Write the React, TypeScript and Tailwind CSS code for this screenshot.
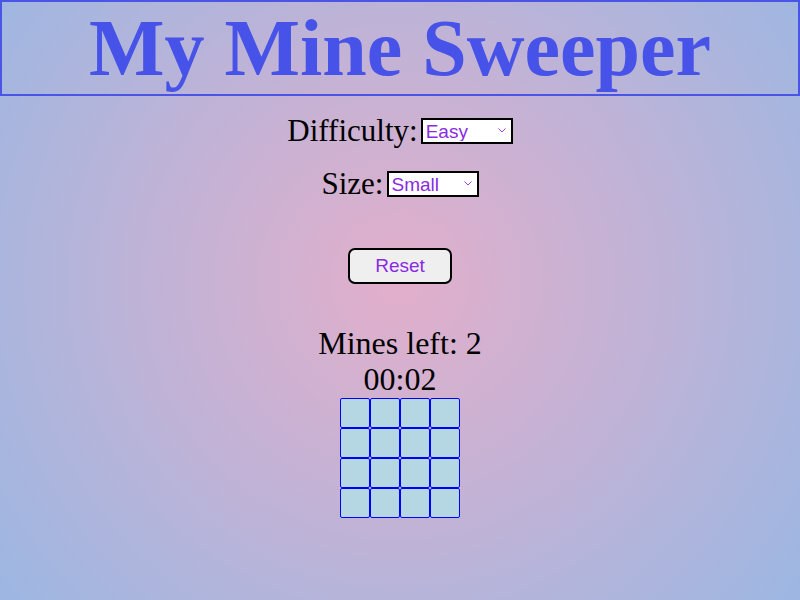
import React, { useState } from 'react';

const Chevron: React.FC = () => (
    <svg width="8" height="5" viewBox="0 0 8 5" className="absolute right-[7px] top-[10px] pointer-events-none">
        <path d="M0.5 0.5 L4 4 L7.5 0.5" fill="none" stroke="#8a2be2" strokeWidth="0.9" />
    </svg>
);

interface PickerProps {
    value: string;
    options: string[];
    onChange: (v: string) => void;
}

const Picker: React.FC<PickerProps> = ({ value, options, onChange }) => {
    return (
        <div className="relative ml-[3px] w-[92px] h-[26px]">
            <select
                value={value}
                onChange={(e) => onChange(e.target.value)}
                className="appearance-none w-full h-full border-2 border-black bg-white text-[#8a2be2] text-[19px] pl-[3px] font-['Liberation_Sans',Arial,sans-serif] leading-none outline-none"
            >
                {options.map((o) => (
                    <option key={o} value={o}>
                        {o}
                    </option>
                ))}
            </select>
            <Chevron />
        </div>
    );
};

const App: React.FC = () => {
    const [difficulty, setDifficulty] = useState('Easy');
    const [size, setSize] = useState('Small');
    const cells = Array.from({ length: 16 });

    return (
        <div className="w-full min-h-[600px] bg-[radial-gradient(circle_at_50%_47%,#e2afcb_0%,#9cb7e2_100%)] bg-[#9cb7e2] font-['Liberation_Serif','Times_New_Roman',serif] text-black">
            <h1 className="border-2 border-[#4a55e6] text-center text-[80px] font-bold leading-[92px] text-[#4752e8]">
                My Mine Sweeper
            </h1>
            <div className="flex flex-col items-center">
                <div className="mt-[17px] h-[36px] flex items-center">
                    <span className="text-[31px]">Difficulty:</span>
                    <Picker value={difficulty} options={['Easy', 'Medium', 'Hard']} onChange={setDifficulty} />
                </div>
                <div className="mt-[17px] h-[36px] flex items-center">
                    <span className="text-[31px]">Size:</span>
                    <Picker value={size} options={['Small', 'Medium', 'Large']} onChange={setSize} />
                </div>
                <button className="mt-[46px] w-[104px] h-[36px] border-2 border-black rounded-[7px] bg-[#efefef] text-[#8a2be2] text-[19px] font-['Liberation_Sans',Arial,sans-serif]">
                    Reset
                </button>
                <div className="mt-[41px] text-[32px] leading-[36px]">Mines left: 2</div>
                <div className="text-[32px] leading-[36px]">00:02</div>
                <div className="mt-px grid grid-cols-4">
                    {cells.map((_, i) => (
                        <div key={i} className="w-[30px] h-[30px] border border-[#0000ff] rounded-[2px] bg-[#b4d7e3]" />
                    ))}
                </div>
            </div>
        </div>
    );
};

export default App;
